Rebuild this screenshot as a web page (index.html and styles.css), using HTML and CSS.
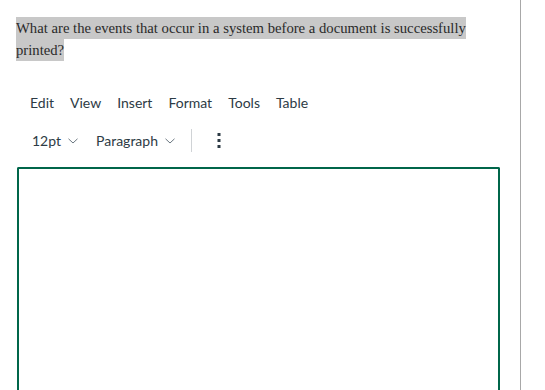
FILE: index.html
```html
<!DOCTYPE html>
<html>
<head>
<meta charset="utf-8">
<link rel="stylesheet" href="styles.css">
</head>
<body>
<div class="page">
  <div class="question">
    <p class="qtext"><span class="hl">What are the events that occur in a system before a document is successfully printed?</span></p>
  </div>
  <div class="editor">
    <div class="menubar">
      <span class="menu">Edit</span>
      <span class="menu">View</span>
      <span class="menu">Insert</span>
      <span class="menu">Format</span>
      <span class="menu">Tools</span>
      <span class="menu">Table</span>
    </div>
    <div class="toolbar">
      <span class="dropdown size">12pt
        <svg class="chev" width="10" height="6" viewBox="0 0 10 6"><path d="M0.5 0.8 L5 5 L9.5 0.8" fill="none" stroke="#6b7780" stroke-width="1"/></svg>
      </span>
      <span class="dropdown para">Paragraph
        <svg class="chev" width="10" height="6" viewBox="0 0 10 6"><path d="M0.5 0.8 L5 5 L9.5 0.8" fill="none" stroke="#6b7780" stroke-width="1"/></svg>
      </span>
      <span class="sep"></span>
      <span class="more">
        <svg width="4" height="16" viewBox="0 0 4 16"><rect x="0.5" y="1" width="3" height="3" fill="#2d3b45"/><rect x="0.5" y="7" width="3" height="3" fill="#2d3b45"/><rect x="0.5" y="13" width="3" height="3" fill="#2d3b45"/></svg>
      </span>
    </div>
    <div class="area"></div>
  </div>
</div>
</body>
</html>
```
FILE: styles.css
```css
html, body {
  margin: 0;
  padding: 0;
  background: #fff;
  height: 100%;
  overflow: hidden;
}
.page {
  width: 521px;
  height: 390px;
  border-right: 1px solid #a8a8a8;
  box-sizing: border-box;
  display: flex;
  flex-direction: column;
}
.question {
  padding: 17px 0 0 16px;
  width: 475px;
}
.qtext {
  margin: 0;
  font-family: "Liberation Serif", "Times New Roman", serif;
  font-size: 14.7px;
  line-height: 22px;
  color: #2a2a2a;
}
.hl {
  background: #c8c8c8;
  padding: 3px 0;
}
.editor {
  padding: 0 0 0 17px;
  display: flex;
  flex-direction: column;
  flex: 1;
}
.menubar {
  display: flex;
  margin-top: 31px;
  padding-left: 13px;
  font-family: Lato, sans-serif;
  font-size: 14px;
  color: #2d3b45;
  height: 20px;
  align-items: center;
}
.menu {
  margin-right: 16px;
}
.toolbar {
  display: flex;
  align-items: center;
  margin-top: 16px;
  padding-left: 15px;
  height: 24px;
  font-family: Lato, sans-serif;
  font-size: 14px;
  color: #2d3b45;
}
.dropdown {
  display: flex;
  align-items: center;
}
.chev {
  margin-left: 7px;
  margin-top: 1px;
}
.size {
  margin-right: 18px;
}
.sep {
  width: 1px;
  height: 23px;
  background: #d0d3d6;
  margin-left: 16px;
}
.more {
  margin-left: 25px;
  display: flex;
  align-items: center;
}
.area {
  margin-top: 15px;
  width: 483px;
  flex: 1;
  border: 2px solid #00664a;
  border-bottom: none;
  border-radius: 2px 2px 0 0;
  box-sizing: border-box;
}
```
